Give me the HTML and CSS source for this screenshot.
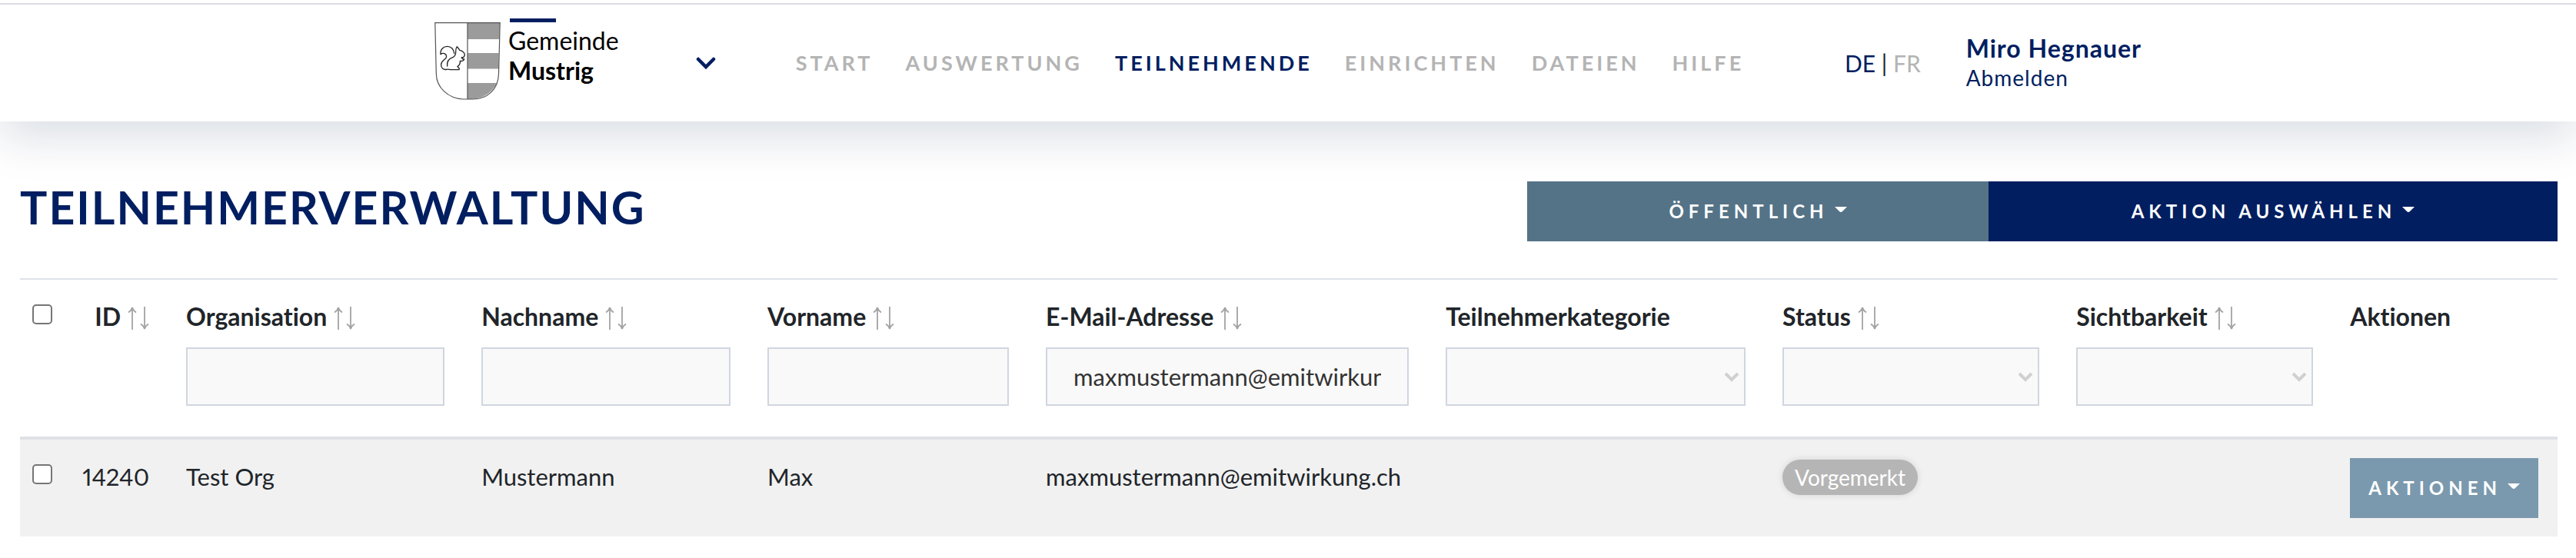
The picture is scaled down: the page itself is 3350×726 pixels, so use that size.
FILE: index.html
```html
<!DOCTYPE html>
<html lang="de">
<head>
<meta charset="utf-8">
<title>Teilnehmerverwaltung</title>
<link rel="stylesheet" href="styles.css">
</head>
<body>
<svg class="sprite" aria-hidden="true">
  <symbol id="sort" viewBox="0 0 28 30">
    <path d="M6 30V2M1 7.500Q5 5 6 1Q7 5 11 7.500M22 0V28M17 22.500Q21 25 22 29Q23 25 27 22.500" fill="none" stroke="currentColor" stroke-width="1.800"/>
  </symbol>
  <symbol id="caret" viewBox="0 0 16 7"><path d="M0 0H16L10 6Q8 8 6 6Z" fill="currentColor"/></symbol>
</svg>
<header class="topbar">
  <div class="topbar-inner">
    <a class="brand" href="#">
      <svg class="shield" viewBox="0 0 86 101" aria-hidden="true">
        <path d="M43 1H85L84.300 22H43ZM43 40H83.500L83.300 60.500H43ZM43 79H81Q71 99 47 100H43Z" fill="#9b9b9b"/>
        <path d="M.8.700H85.200L83.500 67C83 88 68 100 50 100H37C18 99 2.500 85 2.300 67ZM43 1V100" fill="none" stroke="#555" stroke-width="1.200"/>
        <path transform="translate(-4 21) scale(.333)" d="M36 62C34 42 48 31 62 31C76 31 88 42 89 58M36 62C46 54 58 60 59 70C60 82 39 84 38 102C37 116 48 124 60 121C66 119 70 122 76 122H108C112 116 104 113 102 110C110 104 113 96 112 88C118 90 128 87 128 80C124 82 118 78 118 74C124 76 131 70 130 62C128 54 118 46 110 46C108 40 104 36 100 32C94 40 95 48 95 56C94 66 90 72 82 75C68 80 60 90 62 108" fill="none" stroke="#222" stroke-width="4" stroke-linejoin="round" stroke-linecap="round"/>
      </svg>
      <span class="brand-text"><span class="brand-bar"></span><span>Gemeinde</span><strong>Mustrig</strong></span>
    </a>
    <button class="switcher" type="button" aria-label="Gemeinde wechseln">
      <svg viewBox="0 0 26 17" aria-hidden="true"><path d="M3 3L13 13L23 3" fill="none" stroke="currentColor" stroke-width="4.500" stroke-linecap="round"/></svg>
    </button>
    <nav class="nav">
      <a href="#">START</a>
      <a href="#">AUSWERTUNG</a>
      <a class="active" href="#">TEILNEHMENDE</a>
      <a href="#">EINRICHTEN</a>
      <a href="#">DATEIEN</a>
      <a href="#">HILFE</a>
    </nav>
    <div class="lang"><a href="#">DE</a> | <a class="muted" href="#">FR</a></div>
    <div class="user"><strong>Miro Hegnauer</strong><a href="#">Abmelden</a></div>
  </div>
</header>
<main class="page">
  <div class="title-row">
    <h1>TEILNEHMERVERWALTUNG</h1>
    <div class="actions">
      <button class="btn btn-slate" type="button">ÖFFENTLICH<svg class="caret"><use href="#caret"/></svg></button>
      <button class="btn btn-navy" type="button">AKTION AUSWÄHLEN<svg class="caret"><use href="#caret"/></svg></button>
    </div>
  </div>
  <table class="grid">
    <colgroup>
      <col class="c-check"><col class="c-id"><col class="c-org"><col class="c-last"><col class="c-first"><col class="c-mail"><col class="c-cat"><col class="c-status"><col class="c-vis"><col class="c-act">
    </colgroup>
    <thead>
      <tr>
        <th class="check"><input type="checkbox" aria-label="Alle auswählen"></th>
        <th class="num"><span class="head">ID<svg class="sort"><use href="#sort"/></svg></span></th>
        <th><label class="head" for="f-org">Organisation<svg class="sort"><use href="#sort"/></svg></label><input class="field" id="f-org" type="text"></th>
        <th><label class="head" for="f-last">Nachname<svg class="sort"><use href="#sort"/></svg></label><input class="field" id="f-last" type="text"></th>
        <th><label class="head" for="f-first">Vorname<svg class="sort"><use href="#sort"/></svg></label><input class="field" id="f-first" type="text"></th>
        <th><label class="head" for="f-mail">E-Mail-Adresse<svg class="sort"><use href="#sort"/></svg></label><input class="field" id="f-mail" type="text" value="maxmustermann@emitwirkung.ch"></th>
        <th><label class="head" for="f-cat">Teilnehmerkategorie</label><select class="field" id="f-cat"><option></option></select></th>
        <th><label class="head" for="f-status">Status<svg class="sort"><use href="#sort"/></svg></label><select class="field" id="f-status"><option></option></select></th>
        <th><label class="head" for="f-vis">Sichtbarkeit<svg class="sort"><use href="#sort"/></svg></label><select class="field" id="f-vis"><option></option></select></th>
        <th><span class="head">Aktionen</span></th>
      </tr>
    </thead>
    <tbody>
      <tr>
        <td class="check"><input type="checkbox" aria-label="14240 auswählen"></td>
        <td class="num">14240</td>
        <td>Test Org</td>
        <td>Mustermann</td>
        <td>Max</td>
        <td>maxmustermann@emitwirkung.ch</td>
        <td></td>
        <td><span class="badge">Vorgemerkt</span></td>
        <td></td>
        <td><button class="btn btn-row" type="button">AKTIONEN<svg class="caret"><use href="#caret"/></svg></button></td>
      </tr>
    </tbody>
  </table>
</main>
</body>
</html>
```
FILE: styles.css
```css
* { box-sizing: border-box; }
body {
  margin: 0;
  padding-top: 4px;
  background: #fff;
  color: #212529;
  font: 32px/48px Lato, "Open Sans", sans-serif;
  font-variant-ligatures: none;
}
a { color: inherit; text-decoration: none; }
.sprite { display: none; }

.topbar {
  border-top: 2px solid #dcdce0;
  background: #fff;
  box-shadow: 0 20px 60px rgba(10, 33, 77, .15);
  clip-path: inset(0 0 -100px 0);
}
.topbar-inner {
  display: flex;
  align-items: center;
  max-width: 2220px;
  height: 152px;
  margin: 0 auto;
}
.brand { display: flex; gap: 10px; align-self: flex-start; color: #000; font-size: 32px; line-height: 39px; }
.shield { width: 86px; height: 101px; margin-top: 23px; }
.brand-text { display: flex; flex-direction: column; padding-top: 18px; }
.brand-bar { width: 60px; height: 5px; margin: 0 0 4px 2px; background: #001e60; }
.switcher { width: 32px; margin-left: 100px; padding: 0; border: 0; background: none; color: #001e60; }
.switcher svg { display: block; width: 26px; height: 17px; }
.nav { display: flex; gap: 42px; margin-left: 98px; color: #b4b4b4; font-size: 27px; font-weight: 700; letter-spacing: 4px; }
.nav .active { color: #001e60; }
.lang { margin-left: auto; font-size: 30px; color: #212529; }
.lang a { color: #001e60; }
.lang .muted { color: #b4b4b4; }
.user { display: flex; flex-direction: column; margin-left: 59px; color: #001e60; line-height: 38px; letter-spacing: 1px; }
.user strong { font-size: 32px; }
.user a { font-size: 28px; }

.page { padding: 78px 24px 0 26px; }
.title-row { display: flex; justify-content: space-between; height: 126px; }
h1 { margin: 0; color: #001e60; font-size: 59px; line-height: 68px; letter-spacing: 2px; }
.actions { display: grid; grid-template-columns: 600fr 740fr; flex: 0 0 1340px; align-self: flex-start; }
.btn {
  display: flex;
  align-items: center;
  justify-content: center;
  gap: 8px;
  height: 78px;
  padding: 0 24px;
  border: 0;
  color: #fff;
  font: 700 24px/36px Lato, sans-serif;
  letter-spacing: 6px;
}
.btn-slate { background: #557387; }
.btn-navy { background: #001e60; }
.btn-row { background: #7b99ae; }
.caret { width: 16px; height: 7px; margin-bottom: 6px; }

.grid { width: 100%; table-layout: fixed; border-collapse: collapse; border-top: 2px solid #dee2e6; }
.c-check { width: 1.76%; } .c-id { width: 4.06%; } .c-org { width: 11.64%; }
.c-last { width: 11.27%; } .c-first { width: 10.97%; } .c-mail { width: 15.76%; }
.c-cat { width: 13.27%; } .c-status { width: 11.58%; } .c-vis { width: 10.79%; } .c-act { width: 8.9%; }
.grid th, .grid td { padding: 24px; text-align: left; vertical-align: top; font-weight: 400; }
.grid td { font-size: 31px; font-variant-numeric: proportional-nums; }
.grid th { padding-bottom: 40px; border-bottom: 4px solid #dee2e6; }
.grid tbody tr { background: #f1f1f1; }
.grid .check { padding-left: 16px; padding-right: 0; }
.grid .num { padding-left: 0; text-align: right; white-space: nowrap; }
.check input {
  display: block;
  appearance: none;
  width: 26px;
  height: 26px;
  margin: 8px 0 0;
  border: 2px solid #767676;
  border-radius: 5px;
  background: #fff;
}
.head { display: flex; align-items: center; gap: 9px; font-weight: 700; }
.num .head { justify-content: flex-end; }
.sort { width: 28px; height: 30px; margin-top: 4px; color: #a3a3a3; }
.field {
  display: block;
  width: 100%;
  height: 76px;
  margin-top: 16px;
  padding: 0 34px;
  border: 2px solid #d0d6e0;
  border-radius: 0;
  background: #f9f9f9;
  color: #333;
  font: 31px/48px Lato, sans-serif;
}
select.field {
  appearance: none;
  background: #f9f9f9 url("data:image/svg+xml,%3Csvg xmlns='http://www.w3.org/2000/svg' viewBox='0 0 20 13'%3E%3Cpath d='M2 2l8 8 8-8' fill='none' stroke='%23d0d0d0' stroke-width='4'/%3E%3C/svg%3E") no-repeat right 6px center / 20px 13px;
}
.badge {
  display: inline-block;
  padding: 0 16px;
  border-radius: 23px;
  background: #b5b5b5;
  box-shadow: 0 0 10px rgba(0, 0, 0, .12);
  color: #fff;
  font-size: 28px;
  line-height: 46px;
}
```
